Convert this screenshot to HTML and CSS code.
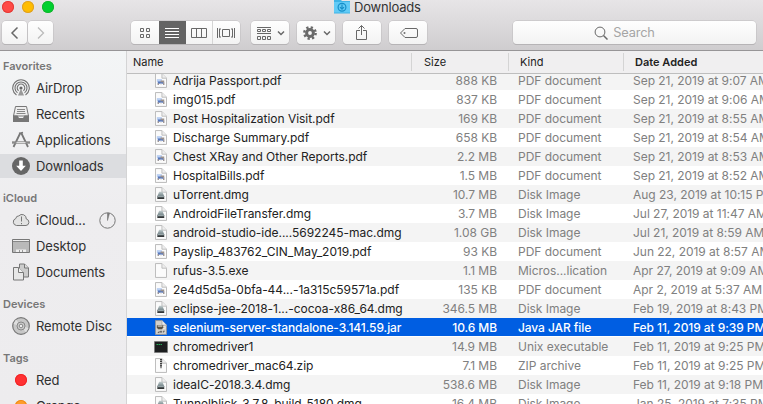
FILE: index.html
```
<!DOCTYPE html>
<html lang="en">
<head>
<meta charset="utf-8">
<title>Downloads</title>
<link rel="stylesheet" href="styles.css">
</head>
<body>
<svg class="defs" aria-hidden="true">
  <defs>
    <linearGradient id="g-disk" x1="0" y1="0" x2="0" y2="1"><stop offset="0" stop-color="#c3cfd0"/><stop offset=".55" stop-color="#76868a"/><stop offset="1" stop-color="#222"/></linearGradient>
    <symbol id="page" viewBox="0 0 13 16"><path d="M.5.5h7l5 5v10H.5z" fill="#fbfbfb" stroke="#b5b5b5"/><path d="M7.5.5v5h5" fill="#eee" stroke="#bbb"/></symbol>
    <symbol id="pdf" viewBox="0 0 13 16"><use href="#page"/><path d="M2 6.500h5.500v3H2z" fill="#b9cff2"/><path d="M3 9h6v2.500H3z" fill="#5678bd"/><path d="M6 8h4v2H6z" fill="#9a918d"/><path d="M3.500 11v2M9.500 10v3" stroke="#8a8284" stroke-width="1.300"/><path d="M5.500 12h2" stroke="#ddd"/></symbol>
    <symbol id="dmg" viewBox="0 0 13 16"><use href="#page"/><path d="M4.500 5h3.500l2 5v3H2.500v-3z" fill="url(#g-disk)"/><path d="M3 10h6.500" stroke="#c9d6d8" stroke-width=".7"/></symbol>
    <symbol id="zip" viewBox="0 0 13 16"><use href="#page"/><path d="M6.500 1v8" stroke="#333" stroke-width="2" stroke-dasharray="1.500 .6"/><path d="M6.500 8v3" stroke="#666" stroke-width="1.500"/></symbol>
    <symbol id="jar" viewBox="0 0 13 16"><path d="M.5.5h7l5 5v10H.5z" fill="#d3d1cc" stroke="#8f9299"/><path d="M7.500.5v5h5" fill="#eee" stroke="#aaa"/><path d="M2 5.500h7v2.800L7.500 10h-4L2 8.300z" fill="#5c5446"/><path d="M3 6.500h5M9 7h2v2H8.500" fill="none" stroke="#ece8df"/><path d="M3 13.500h1.500V12M6 13.500V12h1v1.500M9 13.500V12h1.500" fill="none" stroke="#555"/></symbol>
    <symbol id="exec" viewBox="0 0 14 12"><rect width="14" height="12" fill="#a5a5a5"/><rect x=".7" y=".7" width="12.600" height="10.600" fill="#1c1e1f"/><path d="M2.500 3.500h6" stroke="#25a955" stroke-dasharray="1.500 .5"/></symbol>
  </defs>
</svg>

<div class="window">
  <header class="toolbar">
    <div class="titlebar">
      <div class="lights"><i class="close"></i><i class="minimise"></i><i class="zoom"></i></div>
      <div class="title">
        <svg width="16" height="14" viewBox="0 0 16 14"><path d="M0 0h7l1 1h8v12.500H0z" fill="#3fb4e6"/><path d="M0 2h16v10.500H0z" fill="#62cbf6"/><circle cx="8" cy="7.200" r="3.900" fill="none" stroke="#168fc8" stroke-width="1.200"/><path d="M8 4.500v4.500M6 7.200l2 2 2-2" fill="none" stroke="#168fc8" stroke-width="1.200"/></svg>
        <span>Downloads</span>
      </div>
    </div>
    <div class="controls">
      <button class="btn nav"><svg width="25" height="22"><path d="M15.500 5.500L10 11l5.500 5.500" class="ln heavy"/></svg></button>
      <button class="btn nav off"><svg width="25" height="22"><path d="M10 5.500l5.500 5.500-5.500 5.500" class="ln"/></svg></button>
      <div class="segments">
        <button><svg width="28" height="22"><path d="M9.500 6.500h3v3h-3zM15.500 6.500h3v3h-3zM9.500 12.500h3v3h-3zM15.500 12.500h3v3h-3z" class="ln"/></svg></button>
        <button class="active"><svg width="27" height="22"><path d="M6 6.500h14M6 9.500h14M6 12.500h14M6 15.500h14" class="ln"/></svg></button>
        <button><svg width="26" height="22"><path d="M5.500 6.500h15v9h-15zM10.500 6.500v9M15.500 6.500v9" class="ln"/></svg></button>
        <button class="flow"><svg width="27" height="22"><path d="M9.500 7.500h7v7h-7zM4.500 6v10M6.500 6.500v9M7.500 6.500v1M7.500 14.500v1M21.500 6v10M19.500 6.500v9M18.500 6.500v1M18.500 14.500v1" class="ln"/></svg></button>
      </div>
      <button class="btn group"><svg width="38" height="22"><path d="M6 5.500h14M6 11.500h14M6.500 7.500h3v2h-3zM11.500 7.500h3v2h-3zM16.500 7.500h3v2h-3zM6.500 14.500h3v3h-3zM11.500 14.500h3v3h-3zM16.500 14.500h3v3h-3z" class="ln"/><path d="M27 9.500l3 3 3-3" class="ln heavy"/></svg></button>
      <button class="btn gear"><svg width="38" height="22"><circle cx="13" cy="11" r="3.400" fill="none" stroke="#6a6a6a" stroke-width="3"/><circle cx="13" cy="11" r="5.700" fill="none" stroke="#6a6a6a" stroke-width="2.400" stroke-dasharray="2.240 2.240"/><path d="M27 9.500l3 3 3-3" class="ln heavy"/></svg></button>
      <button class="btn share"><svg width="38" height="22"><path d="M17 8.500h-3.500v9h10v-9H20M18.500 13V3.500M15.500 6.500l3-3 3 3" class="ln"/></svg></button>
      <button class="btn tag"><svg width="38" height="22"><path d="M16 6.500h11q1.500 0 1.500 1.500v6q0 1.500-1.500 1.500H16L11.500 11z" class="ln"/><circle cx="15.500" cy="11" r="1" fill="#707070"/></svg></button>
      <div class="search"><svg width="14" height="14"><circle cx="6" cy="6" r="4.900" class="ln"/><path d="M9.500 9.500L13.500 13.500" class="ln heavy"/></svg><span>Search</span></div>
    </div>
  </header>

  <div class="body">
    <nav class="sidebar">
      <h2>Favorites</h2>
      <a><svg width="18" height="18"><g fill="none" stroke="#737373" stroke-width="1.100"><path d="M4.500 16A8.300 8.300 0 1 1 13.500 16"/><path d="M5.500 13.800A6 6 0 1 1 12.500 13.800"/><path d="M6.600 11.800A3.800 3.800 0 1 1 11.400 11.800"/></g><circle cx="9" cy="9" r="1.600" fill="#666"/><path d="M9 9.500L6 16.500h6z" fill="#999"/></svg>AirDrop</a>
      <a><svg width="18" height="18"><path d="M3.500 1.500h11L16.500 11H1.500z" fill="#eee" stroke="#777"/><path d="M5 4.500h8M5 6.500h8M4.500 8.500h9" stroke="#888"/><path d="M1 10.500h4.500L7 13h4l1.500-2.500H17V17H1z" fill="#777"/></svg>Recents</a>
      <a><svg width="18" height="18"><path d="M8.300 2L1.500 16M9.300 2L16 16" stroke="#777" stroke-width="1.800"/><path d="M0 11.500h18" stroke="#8b8b8b" stroke-width="2.400"/><path d="M4.500 11.500h9" stroke="#ddd"/><path d="M7 2.500l4-1" stroke="#777" stroke-width="1.500"/></svg>Applications</a>
      <a class="current"><svg width="18" height="18"><circle cx="9" cy="9" r="9" fill="#666"/><path d="M7.200 3.500h3.600v5.300h3L9 14 4.200 8.800h3z" fill="#fff"/></svg>Downloads</a>
      <h2>iCloud</h2>
      <a><svg width="18" height="18"><path d="M4.500 14.500a3.600 3.600 0 0 1-.7-7 3 3 0 0 1 3-2.600A4.300 4.300 0 0 1 14.300 8a3.300 3.300 0 0 1-.3 6.500z" fill="#e3e3e3" stroke="#777"/><path d="M9.500 5.500v5M9.500 12v1.200" stroke="#777"/></svg><span class="grow">iCloud...</span><svg class="sync" width="17" height="17"><circle cx="8.500" cy="8.500" r="7.700" fill="none" stroke="#777"/><path d="M8.500 8.500V1L10.500 1.300z" fill="#777" stroke="#777" stroke-width=".6"/></svg></a>
      <a><svg width="18" height="18"><path d="M.5 2.500h17v13H.5z" fill="#b9b9b9" stroke="#777"/><path d="M1 3.500h16" stroke="#eee"/><path d="M1 4.500h16" stroke="#888"/><path d="M4 12.500h10V15H4z" fill="#eee"/><path d="M7.500 13v2M10.500 13v2" stroke="#999"/></svg>Desktop</a>
      <a><svg width="18" height="18"><path d="M7.500 1h5l4 4v9h-9z" fill="#ccc" stroke="#777"/><path d="M12.500 1v4h4" fill="#ddd" stroke="#777"/><path d="M1.500 4.500h5l5 5V17h-10z" fill="#e7e7e7" stroke="#777"/><path d="M6.500 4.500v5h5" fill="#f2f2f2" stroke="#777"/></svg>Documents</a>
      <h2>Devices</h2>
      <a><svg width="18" height="18"><circle cx="9" cy="9" r="8.300" fill="#c7c7c7" stroke="#777" stroke-width="1.200"/><path d="M9 9L4 2.500 1.500 7zM9 9l5 6.500 2.500-4.500z" fill="#dfdfdf"/><circle cx="9" cy="9" r="4" fill="#ccc" stroke="#888"/><circle cx="9" cy="9" r="1.800" fill="#eee" stroke="#888"/></svg>Remote Disc</a>
      <h2>Tags</h2>
      <a><i class="dot red"></i>Red</a>
      <a><i class="dot orange"></i>Orange</a>
    </nav>

    <main class="files">
      <div class="columns"><span>Name</span><span>Size</span><span>Kind</span><span class="sorted">Date Added</span></div>
      <div class="scroll">
        <div class="rows">
          <div class="row"><svg><use href="#pdf"/></svg><b>Adrija Passport.pdf</b><span>888 KB</span><span>PDF document</span><span>Sep 21, 2019 at 9:07 AM</span></div>
          <div class="row"><svg><use href="#pdf"/></svg><b>img015.pdf</b><span>837 KB</span><span>PDF document</span><span>Sep 21, 2019 at 9:06 AM</span></div>
          <div class="row"><svg><use href="#pdf"/></svg><b>Post Hospitalization Visit.pdf</b><span>169 KB</span><span>PDF document</span><span>Sep 21, 2019 at 8:55 AM</span></div>
          <div class="row"><svg><use href="#pdf"/></svg><b>Discharge Summary.pdf</b><span>658 KB</span><span>PDF document</span><span>Sep 21, 2019 at 8:54 AM</span></div>
          <div class="row"><svg><use href="#pdf"/></svg><b>Chest XRay and Other Reports.pdf</b><span>2.2 MB</span><span>PDF document</span><span>Sep 21, 2019 at 8:53 AM</span></div>
          <div class="row"><svg><use href="#pdf"/></svg><b>HospitalBills.pdf</b><span>1.5 MB</span><span>PDF document</span><span>Sep 21, 2019 at 8:52 AM</span></div>
          <div class="row"><svg><use href="#dmg"/></svg><b>uTorrent.dmg</b><span>10.7 MB</span><span>Disk Image</span><span>Aug 23, 2019 at 10:15 PM</span></div>
          <div class="row"><svg><use href="#dmg"/></svg><b>AndroidFileTransfer.dmg</b><span>3.7 MB</span><span>Disk Image</span><span>Jul 27, 2019 at 11:47 AM</span></div>
          <div class="row"><svg><use href="#dmg"/></svg><b>android-studio-ide....5692245-mac.dmg</b><span>1.08 GB</span><span>Disk Image</span><span>Jul 21, 2019 at 8:59 AM</span></div>
          <div class="row"><svg><use href="#pdf"/></svg><b>Payslip_483762_CIN_May_2019.pdf</b><span>93 KB</span><span>PDF document</span><span>Jun 22, 2019 at 8:57 AM</span></div>
          <div class="row"><svg><use href="#page"/></svg><b>rufus-3.5.exe</b><span>1.1 MB</span><span>Micros...lication</span><span>Apr 27, 2019 at 9:09 AM</span></div>
          <div class="row"><svg><use href="#pdf"/></svg><b>2e4d5d5a-0bfa-44...-1a315c59571a.pdf</b><span>135 KB</span><span>PDF document</span><span>Apr 2, 2019 at 5:37 AM</span></div>
          <div class="row"><svg><use href="#dmg"/></svg><b>eclipse-jee-2018-1...-cocoa-x86_64.dmg</b><span>346.5 MB</span><span>Disk Image</span><span>Feb 19, 2019 at 8:43 PM</span></div>
          <div class="row selected"><svg><use href="#jar"/></svg><b>selenium-server-standalone-3.141.59.jar</b><span>10.6 MB</span><span>Java JAR file</span><span>Feb 11, 2019 at 9:39 PM</span></div>
          <div class="row"><svg class="wide"><use href="#exec"/></svg><b>chromedriver1</b><span>14.9 MB</span><span>Unix executable</span><span>Feb 11, 2019 at 9:25 PM</span></div>
          <div class="row"><svg><use href="#zip"/></svg><b>chromedriver_mac64.zip</b><span>7.1 MB</span><span>ZIP archive</span><span>Feb 11, 2019 at 9:25 PM</span></div>
          <div class="row"><svg><use href="#dmg"/></svg><b>ideaIC-2018.3.4.dmg</b><span>538.6 MB</span><span>Disk Image</span><span>Feb 11, 2019 at 9:18 PM</span></div>
          <div class="row"><svg><use href="#dmg"/></svg><b>Tunnelblick_3.7.8_build_5180.dmg</b><span>16.4 MB</span><span>Disk Image</span><span>Jan 25, 2019 at 7:35 PM</span></div>
        </div>
      </div>
    </main>
  </div>
</div>
</body>
</html>
```
FILE: styles.css
```
* { box-sizing: border-box; }
body { margin: 0; overflow: hidden; font-family: Inter, "Liberation Sans", sans-serif; color: #222; }
svg { display: block; flex: none; }
.defs { position: absolute; width: 0; height: 0; }
button { margin: 0; padding: 0; border: 0; background: none; display: block; }
.window { width: 763px; height: 404px; display: flex; flex-direction: column; overflow: hidden; }

.toolbar { height: 51px; flex: none; background: linear-gradient(#e7e5e7, #cfcdcf); border-bottom: 1px solid #979597; }
.titlebar { height: 20px; display: grid; grid-template-columns: 334px 1fr; align-items: start; }
.lights { display: flex; gap: 8px; padding: 1px 0 0 2px; }
.lights i { width: 12px; height: 12px; border-radius: 50%; }
.close { background: #ff4a46; box-shadow: inset 0 0 0 1px #e33c39; }
.minimise { background: #ffbd00; box-shadow: inset 0 0 0 1px #dfa023; }
.zoom { background: #00d02f; box-shadow: inset 0 0 0 1px #13b52f; }
.title { display: flex; gap: 4px; font-size: 13px; line-height: 15px; letter-spacing: -.2px; color: #333; }

.controls { display: flex; padding-left: 2px; }
.btn, .segments, .search { height: 23px; margin-top: 1px; border-radius: 4px; background: linear-gradient(#fefefe, #f3f3f3); box-shadow: 0 0 0 .5px #bdbbbd, 0 1px 0 #aeacae; }
.ln { fill: none; stroke: #686868; stroke-width: 1; }
.heavy { stroke-width: 1.500; }
.nav { width: 25px; margin-right: 1px; }
.off .ln { stroke: #bbb; stroke-width: 1.300; }
.segments { display: flex; width: 109px; margin-left: 77px; overflow: hidden; }
.segments .active { background: #646464; }
.active .ln { stroke: #fff; }
.flow { border-left: 1px solid #d5d5d5; }
.group { width: 38px; margin-left: 11px; }
.gear { width: 38px; margin-left: 8px; }
.share { width: 38px; margin-left: 8px; }
.tag { width: 38px; margin-left: 8px; }
.search { width: 243px; margin-left: 86px; display: flex; justify-content: center; align-items: center; gap: 5px; padding-right: 20px; font-size: 12.800px; letter-spacing: -.2px; color: #a5a5a5; }

.body { display: flex; flex: 1; min-height: 0; }
.sidebar { width: 127px; flex: none; background: linear-gradient(#f3f5f6, #eeedef 45%, #edecee); border-right: 1px solid #d4d4d5; overflow: hidden; }
.sidebar h2 { margin: 0; height: 28px; padding: 10px 0 0 3px; font-size: 11px; line-height: 18px; font-weight: 600; letter-spacing: -.03px; color: #777; }
.sidebar h2:first-child { height: 24px; padding-top: 6px; }
.sidebar a { height: 26px; padding-left: 12px; display: flex; align-items: center; gap: 6px; font-size: 13px; letter-spacing: -.1px; color: #303030; white-space: nowrap; }
.sidebar a > svg:first-child { width: 18px; }
.sidebar .current { height: 24px; margin: 1px 0; background: #dcdde0; }
.grow { flex: 1; }
.sync { margin-right: 10px; }
.dot { width: 12px; height: 12px; margin: 0 3px; border-radius: 50%; }
.red { background: #ff3133; box-shadow: inset 0 0 0 1px #f02527; }
.orange { background: #ff9d2b; box-shadow: inset 0 0 0 1px #ee8a18; }

.files { flex: 1; min-width: 0; display: flex; flex-direction: column; }
.columns { height: 23px; flex: none; display: grid; grid-template-columns: 285px 97px 115px 139px; align-items: center; background: #f0eff0; border-bottom: 1px solid #bebebe; font-size: 11px; line-height: 18px; color: #222; }
.columns span { padding-left: 11px; border-right: 1px solid #d4d4d4; }
.columns span:first-child { padding-left: 6px; }
.columns span:nth-child(2) { padding-left: 12px; }
.columns .sorted { font-weight: 600; border: 0; }
.scroll { flex: 1; min-height: 0; overflow: hidden; }
.rows { margin-top: -3px; }
.row { height: 19px; display: grid; grid-template-columns: 13px 239px 1fr 105px 140px; padding-left: 28px; align-items: center; background: #fff; font-size: 12px; line-height: 18px; letter-spacing: -.03px; color: #808080; white-space: nowrap; }
.row:nth-child(odd) { background: #f4f4f4; }
.row svg { width: 12px; height: 15px; }
.row svg.wide { width: 14px; height: 12px; margin-left: -1px; }
.row b { padding-left: 5px; font-weight: 400; color: #222; }
.row span:nth-of-type(1) { text-align: right; padding-right: 21px; }
.row span:nth-of-type(3) { padding-left: 10px; }
.row.selected { background: #005ee2; box-shadow: inset 0 -1px #fff; font-weight: 500; letter-spacing: -.08px; color: #fff; }
.row.selected b { font-weight: 500; color: #fff; }
```
